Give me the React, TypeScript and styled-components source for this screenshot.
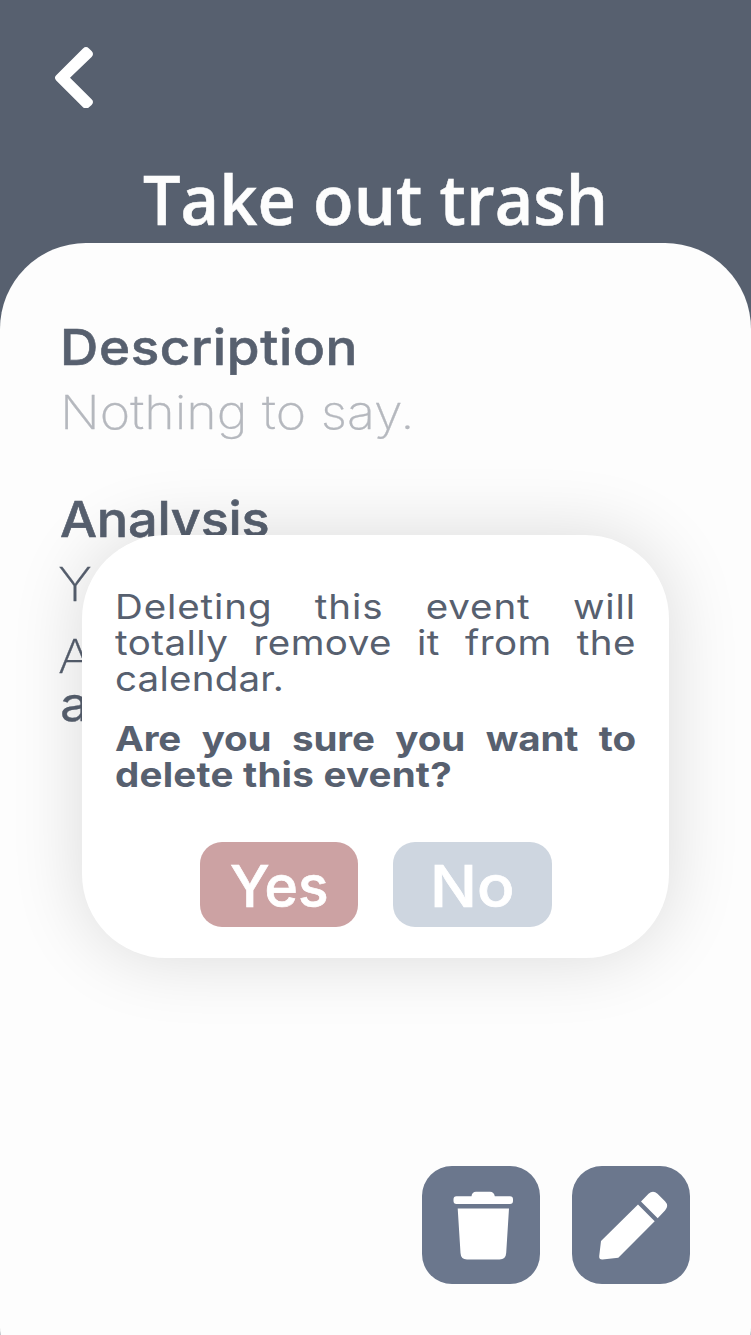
import React from "react";
import styled, { createGlobalStyle } from "styled-components";

const GlobalStyle = createGlobalStyle`
  * { box-sizing: border-box; }
  body { margin: 0; background: #fdfdfd; }
  h1, h2, p { margin: 0; }
  button { border: 0; padding: 0; font: inherit; }
`;

const ink = "#57606f";

const Screen = styled.main`
  position: relative;
  width: 751px;
  height: 1335px;
  overflow: hidden;
  background: ${ink};
  color: ${ink};
  font-family: Inter, "Liberation Sans", sans-serif;
  white-space: nowrap;
`;

const Header = styled.header`
  height: 243.4px;
  display: flex;
  flex-direction: column;
  padding-top: 47px;
`;

const BackButton = styled.button`
  display: block;
  width: 38px;
  height: 61px;
  margin-left: 55px;
  background: none;
  svg { display: block; }
`;

const Title = styled.h1`
  margin: 48px 0 0 143px;
  color: #fdfdfd;
  font: 600 69px/84px "Open Sans", "Noto Sans", sans-serif;
  -webkit-text-stroke: 0.5px currentColor;
  transform: scaleX(0.965);
  transform-origin: left;
`;

const Sheet = styled.section`
  height: 1170px;
  padding: 69px 60px 0;
  border-radius: 86px;
  background: #fdfdfd;
`;

const Heading = styled.h2<{ $stretch: number; $spacing: number }>`
  font-size: 50px;
  line-height: 70px;
  font-weight: 500;
  -webkit-text-stroke: 0.6px currentColor;
  letter-spacing: ${(p) => p.$spacing}px;
  transform: scaleX(${(p) => p.$stretch});
  transform-origin: left;
`;

const Body = styled.p<{ $muted?: boolean; $weight?: number; $line?: number; $gap?: number }>`
  margin-top: ${(p) => p.$gap ?? 0}px;
  margin-left: ${(p) => (p.$muted || p.$weight ? 0 : -2)}px;
  font-size: 46.5px;
  line-height: ${(p) => p.$line ?? 60}px;
  font-weight: ${(p) => p.$weight ?? 200};
  -webkit-text-stroke: 0.3px currentColor;
  color: ${(p) => (p.$muted ? "#b5b8be" : ink)};
  transform: scaleX(1.117);
  transform-origin: left;
`;

const Block = styled.div<{ $top?: number }>`
  margin-top: ${(p) => p.$top ?? 0}px;
`;

const Dialog = styled.div`
  position: absolute;
  left: 82px;
  top: 534.5px;
  width: 587px;
  height: 423.5px;
  padding: 54px 33px 0;
  border-radius: 84px;
  background: #fff;
  box-shadow: 0 0 72px rgba(0, 0, 0, 0.14);
`;

const Message = styled.p<{ $strong?: boolean }>`
  width: calc(100% / 1.12);
  margin-top: ${(p) => (p.$strong ? 24 : 0)}px;
  font-size: 34.4px;
  line-height: 36px;
  font-weight: ${(p) => (p.$strong ? 700 : 400)};
  transform: scaleX(1.12);
  transform-origin: left;
`;

const Line = styled.span<{ $spacing: number; $last?: boolean }>`
  display: block;
  text-align-last: ${(p) => (p.$last ? "left" : "justify")};
  letter-spacing: ${(p) => p.$spacing}px;
`;

const Choices = styled.div`
  display: flex;
  justify-content: center;
  gap: 35px;
  margin-top: 49px;
`;

const Choice = styled.button<{ $tone: string }>`
  width: 158.5px;
  height: 85.5px;
  border-radius: 22px;
  background: ${(p) => p.$tone};
  color: #fff;
  font-size: 58px;
  line-height: 88px;
  font-weight: 500;
  -webkit-text-stroke: 0.7px currentColor;
`;

const ChoiceLabel = styled.span<{ $stretch: number }>`
  display: block;
  transform: scaleX(${(p) => p.$stretch});
`;

const Actions = styled.nav`
  position: absolute;
  right: 61px;
  bottom: 51px;
  display: flex;
  gap: 31.5px;
`;

const Action = styled.button`
  width: 118.2px;
  height: 118.2px;
  border-radius: 30px;
  background: #6b778d;
  svg { display: block; }
`;

export default function App() {
  return (
    <>
      <GlobalStyle />
      <Screen>
        <Header>
          <BackButton aria-label="Back">
            <svg width="38" height="61" viewBox="0 0 38 61" fill="#fff">
              <path d="M1.2 28.2 28 1.4Q31 -1.4 34 1.4L36.6 4Q39.4 7 36.6 10L15 30.7 36.6 52.3Q39.4 55 36.6 58L34 60.2Q31 63 28 60.2L1.2 33.4Q-1.3 30.8 1.2 28.2Z" />
            </svg>
          </BackButton>
          <Title>Take out trash</Title>
        </Header>
        <Sheet>
          <Block>
            <Heading $stretch={1.06} $spacing={0.6}>Description</Heading>
            <Body $muted>Nothing to say.</Body>
          </Block>
          <Block $top={42}>
            <Heading $stretch={1.045} $spacing={-0.2}>Analysis</Heading>
            <Body>Yo</Body>
            <Body $line={48} $gap={18}>A</Body>
            <Body $weight={400} $line={48}>a</Body>
          </Block>
        </Sheet>
        <Dialog role="dialog">
          <Message>
            <Line $spacing={0.8}>Deleting this event will</Line>
            <Line $spacing={0.4}>totally remove it from the</Line>
            <Line $spacing={0.2} $last>calendar.</Line>
          </Message>
          <Message $strong>
            <Line $spacing={-0.1}>Are you sure you want to</Line>
            <Line $spacing={0.2} $last>delete this event?</Line>
          </Message>
          <Choices>
            <Choice $tone="#cca2a3"><ChoiceLabel $stretch={0.98}>Yes</ChoiceLabel></Choice>
            <Choice $tone="#ced6e0"><ChoiceLabel $stretch={1.07}>No</ChoiceLabel></Choice>
          </Choices>
        </Dialog>
        <Actions>
          <Action aria-label="Delete">
            <svg width="118" height="118" viewBox="0 0 118 118" fill="#fff">
              <path d="M35 30.300H49.500Q50 25.700 54 25.700H68Q72 25.700 72.800 30.300H88Q91 30.300 91 33.300V35Q91 38 88 38H34.500Q31.500 38 31.500 35V33.300Q31.500 30.300 34.500 30.300ZM35.700 42.500H87L84.200 87Q83.800 93.500 77.500 93.500H45Q38.800 93.500 38.500 87Z" />
            </svg>
          </Action>
          <Action aria-label="Edit">
            <svg width="118" height="118" viewBox="0 0 118 118" fill="#fff">
              <path d="M66 38.500 82.700 55.200 46.300 91.700 30.500 93.500Q27 93.700 27.200 90.300L29 75ZM69 35.500 76.500 27.800Q81 23.500 85.500 27.800L93 35.300Q97.300 39.800 93 44.500L85.700 52.200Z" />
            </svg>
          </Action>
        </Actions>
      </Screen>
    </>
  );
}
